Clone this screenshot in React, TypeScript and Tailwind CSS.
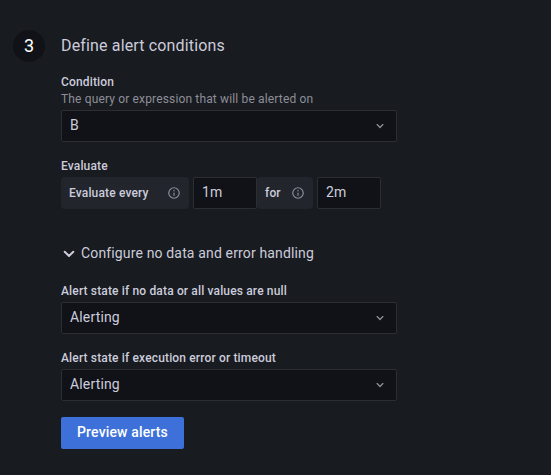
import React from "react";

function Chevron() {
  return (
    <svg viewBox="0 0 24 24" className="h-4 w-4 text-[#8e8e99]" fill="currentColor">
      <path d="M17 9.17a1 1 0 0 0-1.41 0L12 12.71 8.46 9.17a1 1 0 0 0-1.41 0 1 1 0 0 0 0 1.42l4.24 4.24a1 1 0 0 0 1.42 0L17 10.59a1 1 0 0 0 0-1.42Z" />
    </svg>
  );
}

function CollapseArrow() {
  return (
    <svg viewBox="0 0 16 16" className="h-4 w-4" fill="none" stroke="currentColor" strokeWidth="2" strokeLinecap="round" strokeLinejoin="round">
      <path d="M3.700 6.700 8 11l4.300-4.300" />
    </svg>
  );
}

function Info() {
  return (
    <svg viewBox="0 0 24 24" className="h-[14px] w-[14px] text-[#8e8f9a]" fill="currentColor">
      <path d="M12 2a10 10 0 1 0 10 10A10 10 0 0 0 12 2Zm0 18a8 8 0 1 1 8-8 8 8 0 0 1-8 8Zm0-9a1 1 0 0 0-1 1v4a1 1 0 0 0 2 0v-4a1 1 0 0 0-1-1Zm0-4a1.250 1.250 0 1 0 1.250 1.250A1.250 1.250 0 0 0 12 7Z" />
    </svg>
  );
}

function Select({ value }: { value: string }) {
  return (
    <div className="flex h-8 w-[336px] items-center justify-between rounded-[2px] border border-[#2d2e34] bg-[#111217] px-2 text-[14px] leading-[22px] tracking-[0.15px]">
      <span className="pb-[2px]">{value}</span>
      <Chevron />
    </div>
  );
}

function Field({ value }: { value: string }) {
  return (
    <div className="flex h-8 w-16 items-center rounded-[2px] border border-[#2d2e34] bg-[#111217] px-2 pb-[2px] text-[14px] font-normal">
      {value}
    </div>
  );
}

function Label({ children }: { children: React.ReactNode }) {
  return <div className="h-[15px] text-[12px] font-medium leading-[15px] tracking-[0.15px]">{children}</div>;
}

export default function App() {
  return (
    <div className="flex h-[475px] w-[551px] bg-[#181b1f] pl-[13px] pt-[30px] font-[Roboto,sans-serif] text-[#ccccdc]">
      <div className="flex h-8 w-8 shrink-0 items-center justify-center rounded-full bg-[#111217] pb-[2px] text-[18px] text-white">3</div>
      <div className="flex flex-col items-start pl-4">
        <h2 className="mt-[5px] h-[22px] text-[16px] leading-[22px] tracking-[0.15px]">Define alert conditions</h2>
        <div className="mt-[18px]"><Label>Condition</Label></div>
        <div className="mb-[3px] h-[17px] text-[12px] leading-[19px] tracking-[0.15px] text-[#8e8e99]">The query or expression that will be alerted on</div>
        <Select value="B" />
        <div className="mb-[3px] mt-[17px]"><Label>Evaluate</Label></div>
        <div className="flex h-8 items-center text-[12px] font-medium tracking-[0.15px]">
          <div className="mr-1 flex h-8 w-32 items-center justify-between rounded bg-[#22252b] px-2">Evaluate every <Info /></div>
          <Field value="1m" />
          <div className="mr-1 flex h-8 w-14 items-center justify-between rounded bg-[#22252b] px-2">for <Info /></div>
          <Field value="2m" />
        </div>
        <div className="mt-[33px] flex h-[22px] items-center gap-1 text-[14px] tracking-[0.15px]"><CollapseArrow />Configure no data and error handling</div>
        <div className="mb-[3px] mt-5"><Label>Alert state if no data or all values are null</Label></div>
        <Select value="Alerting" />
        <div className="mb-[3px] mt-[17px]"><Label>Alert state if execution error or timeout</Label></div>
        <Select value="Alerting" />
        <button className="mt-4 h-8 w-[123px] rounded-[2px] bg-[#3d71d9] pb-[2px] text-[14px] font-medium tracking-[0.15px] text-white">Preview alerts</button>
      </div>
    </div>
  );
}
